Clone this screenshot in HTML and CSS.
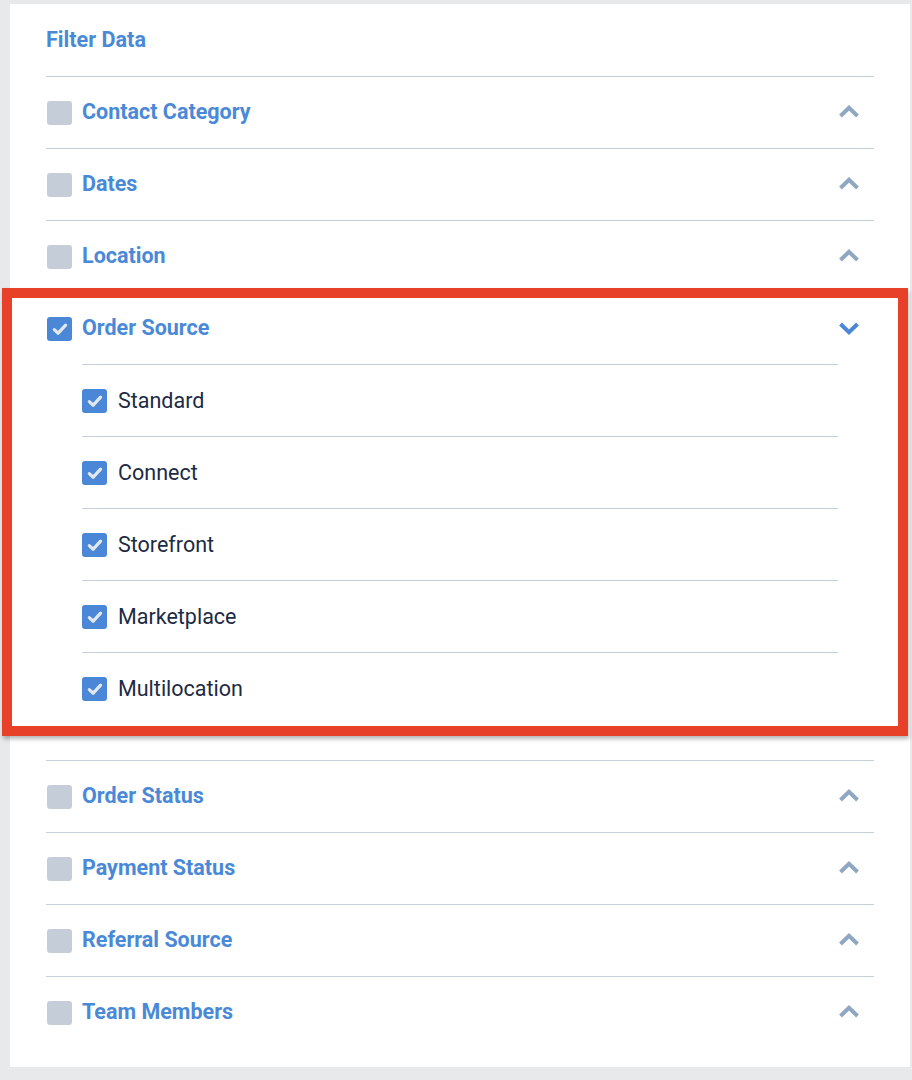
FILE: index.html
```html
<!DOCTYPE html>
<html lang="en">
<head>
<meta charset="utf-8">
<title>Filter Data</title>
<link rel="stylesheet" href="styles.css">
</head>
<body>
<div class="panel">
  <h2 class="title">Filter Data</h2>
  <ul class="groups">
    <li class="group">
      <div class="row">
        <span class="box"></span>
        <span class="label">Contact Category</span>
        <svg class="chev" width="22" height="13" viewBox="0 0 22 13"><polyline points="2.5,11 11,2.8 19.5,11" fill="none" stroke="currentColor" stroke-width="4"/></svg>
      </div>
    </li>
    <li class="group">
      <div class="row">
        <span class="box"></span>
        <span class="label">Dates</span>
        <svg class="chev" width="22" height="13" viewBox="0 0 22 13"><polyline points="2.5,11 11,2.8 19.5,11" fill="none" stroke="currentColor" stroke-width="4"/></svg>
      </div>
    </li>
    <li class="group">
      <div class="row">
        <span class="box"></span>
        <span class="label">Location</span>
        <svg class="chev" width="22" height="13" viewBox="0 0 22 13"><polyline points="2.5,11 11,2.8 19.5,11" fill="none" stroke="currentColor" stroke-width="4"/></svg>
      </div>
    </li>
    <li class="group open highlighted">
      <div class="row">
        <span class="box checked"><svg width="24" height="24" viewBox="0 0 24 24"><polyline points="6.3,12.6 10.2,16.2 17.6,8.2" fill="none" stroke="currentColor" stroke-width="3.2" stroke-linecap="round" stroke-linejoin="round"/></svg></span>
        <span class="label">Order Source</span>
        <svg class="chev down" width="22" height="13" viewBox="0 0 22 13"><polyline points="2.5,2 11,10.2 19.5,2" fill="none" stroke="currentColor" stroke-width="4"/></svg>
      </div>
      <ul class="items">
        <li class="item"><span class="box checked"><svg width="24" height="24" viewBox="0 0 24 24"><polyline points="6.3,12.6 10.2,16.2 17.6,8.2" fill="none" stroke="currentColor" stroke-width="3.2" stroke-linecap="round" stroke-linejoin="round"/></svg></span><span class="item-label">Standard</span></li>
        <li class="item"><span class="box checked"><svg width="24" height="24" viewBox="0 0 24 24"><polyline points="6.3,12.6 10.2,16.2 17.6,8.2" fill="none" stroke="currentColor" stroke-width="3.2" stroke-linecap="round" stroke-linejoin="round"/></svg></span><span class="item-label">Connect</span></li>
        <li class="item"><span class="box checked"><svg width="24" height="24" viewBox="0 0 24 24"><polyline points="6.3,12.6 10.2,16.2 17.6,8.2" fill="none" stroke="currentColor" stroke-width="3.2" stroke-linecap="round" stroke-linejoin="round"/></svg></span><span class="item-label">Storefront</span></li>
        <li class="item"><span class="box checked"><svg width="24" height="24" viewBox="0 0 24 24"><polyline points="6.3,12.6 10.2,16.2 17.6,8.2" fill="none" stroke="currentColor" stroke-width="3.2" stroke-linecap="round" stroke-linejoin="round"/></svg></span><span class="item-label">Marketplace</span></li>
        <li class="item"><span class="box checked"><svg width="24" height="24" viewBox="0 0 24 24"><polyline points="6.3,12.6 10.2,16.2 17.6,8.2" fill="none" stroke="currentColor" stroke-width="3.2" stroke-linecap="round" stroke-linejoin="round"/></svg></span><span class="item-label">Multilocation</span></li>
      </ul>
      <div class="annotation"></div>
    </li>
    <li class="group">
      <div class="row">
        <span class="box"></span>
        <span class="label">Order Status</span>
        <svg class="chev" width="22" height="13" viewBox="0 0 22 13"><polyline points="2.5,11 11,2.8 19.5,11" fill="none" stroke="currentColor" stroke-width="4"/></svg>
      </div>
    </li>
    <li class="group">
      <div class="row">
        <span class="box"></span>
        <span class="label">Payment Status</span>
        <svg class="chev" width="22" height="13" viewBox="0 0 22 13"><polyline points="2.5,11 11,2.8 19.5,11" fill="none" stroke="currentColor" stroke-width="4"/></svg>
      </div>
    </li>
    <li class="group">
      <div class="row">
        <span class="box"></span>
        <span class="label">Referral Source</span>
        <svg class="chev" width="22" height="13" viewBox="0 0 22 13"><polyline points="2.5,11 11,2.8 19.5,11" fill="none" stroke="currentColor" stroke-width="4"/></svg>
      </div>
    </li>
    <li class="group">
      <div class="row">
        <span class="box"></span>
        <span class="label">Team Members</span>
        <svg class="chev" width="22" height="13" viewBox="0 0 22 13"><polyline points="2.5,11 11,2.8 19.5,11" fill="none" stroke="currentColor" stroke-width="4"/></svg>
      </div>
    </li>
  </ul>
</div>
</body>
</html>
```

FILE: styles.css
```css
* { box-sizing: border-box; }

html, body {
  margin: 0;
  padding: 0;
  background: #e8e9ea;
  font-family: Roboto, "Liberation Sans", Arial, sans-serif;
}

body {
  padding: 4px 2px 14px 10px;
}

.panel {
  width: 900px;
  background: #ffffff;
  padding: 0 36px 19px 36px;
}

.title {
  margin: 0;
  height: 72px;
  display: flex;
  align-items: center;
  font-size: 21.6px;
  font-weight: 700;
  color: #4a89d8;
  padding-bottom: 1px;
}

.groups, .items {
  list-style: none;
  margin: 0;
  padding: 0;
}

.group {
  position: relative;
  border-top: 1px solid #c4d0dc;
}

.row {
  height: 71px;
  display: flex;
  align-items: center;
  gap: 10px;
  padding-left: 1px;
}

.box {
  width: 25px;
  height: 24px;
  border-radius: 3px;
  background: #c5ced8;
  flex: none;
  display: flex;
  align-items: center;
  justify-content: center;
  color: #e2e7ee;
}

.box.checked {
  background: #4a87d6;
}

.box svg { display: block; }

.label {
  font-size: 21.5px;
  font-weight: 700;
  color: #4a89d8;
  flex: 1;
  padding-bottom: 2px;
}

.chev {
  color: #8fa7c1;
  margin-right: 14px;
  margin-top: -3px;
  flex: none;
}

.chev.down {
  color: #4a87d6;
  margin-top: 0;
}

.group.open {
  padding-bottom: 36px;
}

.items {
  margin: 0 36px 0 36px;
}

.item {
  border-top: 1px solid #c4d0dc;
  height: 72px;
  display: flex;
  align-items: center;
  gap: 11px;
}

.item-label {
  font-size: 21.5px;
  font-weight: 400;
  color: #1c2a44;
  padding-bottom: 1px;
}

.annotation {
  position: absolute;
  left: -44px;
  top: -5px;
  width: 906px;
  height: 448px;
  border: 10px solid #e8412a;
  box-shadow: 1px 3px 4px rgba(0, 0, 0, 0.28);
  pointer-events: none;
}
```
